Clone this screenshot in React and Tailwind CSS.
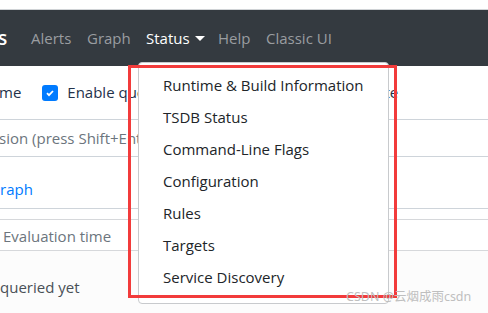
import React from "react";

const items = [
  "Runtime & Build Information",
  "TSDB Status",
  "Command-Line Flags",
  "Configuration",
  "Rules",
  "Targets",
  "Service Discovery",
];

export default function App() {
  return (
    <div
      className="relative w-[488px] h-[313px] overflow-hidden bg-white text-[15px] text-[#212529]"
      style={{ fontFamily: "'Open Sans', sans-serif" }}
    >
      <div className="h-[10px] bg-white border-b border-[#d0d3d6]" />
      {/* navbar */}
      <nav className="h-[56px] bg-[#343a40] flex items-center whitespace-nowrap">
        <span className="text-white text-[19px] font-semibold -ml-[2px] w-[33px]">s</span>
        <span className="text-[#9a9da0] w-[56px]">Alerts</span>
        <span className="text-[#9a9da0] w-[59px]">Graph</span>
        <span className="text-white flex items-center w-[72px]">
          Status
          <span className="ml-[5px] w-0 h-0 border-l-[5px] border-r-[5px] border-t-[5px] border-l-transparent border-r-transparent border-t-white" />
        </span>
        <span className="text-[#9a9da0] w-[48px]">Help</span>
        <span className="text-[#9a9da0]">Classic UI</span>
      </nav>

      {/* page content */}
      <div className="flex flex-col whitespace-nowrap">
        <div className="h-[54px] flex items-center border-b border-[#ced4da]">
          <span className="-ml-[1px] text-[#24324a]">me</span>
          <span className="ml-[21px] w-[16px] h-[16px] rounded-[3px] bg-[#007bff] flex items-center justify-center">
            <svg width="10" height="10" viewBox="0 0 10 10">
              <path d="M2 5.2l2 2L8 3" stroke="white" strokeWidth="1.8" fill="none" />
            </svg>
          </span>
          <span className="ml-[9px] text-[#24324a]">Enable query history</span>
          <span className="ml-[39px] text-[#24324a]">Enable autocomplete</span>
        </div>
        <div className="h-[37px] flex items-center border-b border-[#ced4da] text-[#6c757d] -ml-[1px]">
          sion (press Shift+Enter for newlines)
        </div>
        <div className="h-[52px] flex items-end pb-[8px] border-b border-[#ced4da] text-[#007bff]">
          raph
        </div>
        <div className="h-[10px]" />
        <div className="h-[32px] flex items-center pt-[3px] border-t border-b border-[#d6d8db] text-[#6c757d] pl-[3px]">
          Evaluation time
        </div>
        <div className="h-[72px] bg-[#fcfcfc] flex items-center text-[#495057]">
          queried yet
        </div>
      </div>

      {/* dropdown menu */}
      <div className="absolute left-[138px] top-[62px] w-[251px] pt-[6px] pb-[10px] bg-white border border-[#c8cacd] rounded-[4px] whitespace-nowrap">
        {items.map((item) => (
          <div key={item} className="h-[32px] flex items-center pl-[24px] text-[#212529]">
            {item}
          </div>
        ))}
      </div>

      {/* annotation box */}
      <div className="absolute left-[128px] top-[65px] w-[269px] h-[233px] border-[3px] border-[#f23b3b]" />

      {/* watermark */}
      <div
        className="absolute left-[346px] top-[288px] text-[12.5px] text-[#bfbfbf]"
        style={{ fontFamily: "'Noto Sans', 'Noto Sans CJK SC', sans-serif" }}
      >
        CSDN @云烟成雨csdn
      </div>
    </div>
  );
}
